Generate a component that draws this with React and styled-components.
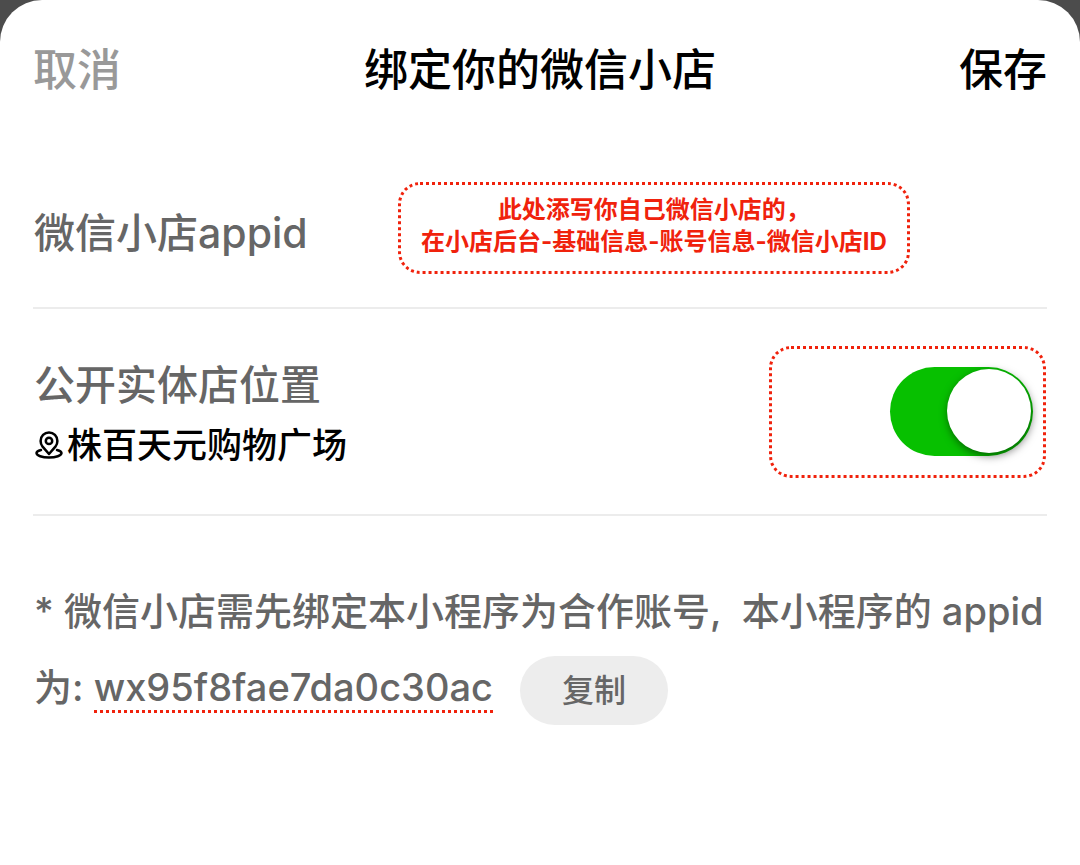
import { useState } from "react";
import styled, { createGlobalStyle } from "styled-components";

export default function App() {

  const [showLocation, setShowLocation] = useState(true);
  const appid = "wx95f8fae7da0c30ac"

  function copyAppid() {
    navigator.clipboard?.writeText(appid)
  }

  return (
    <>
      <GlobalStyle />
      <Sheet>
        <Header>
          <CancelButton type="button">取消</CancelButton>
          <Title>绑定你的微信小店</Title>
          <SaveButton type="button">保存</SaveButton>
        </Header>

        <Row $minHeight={148}>
          <AppidLabel>微信小店appid</AppidLabel>
          <Hint>
            此处添写你自己微信小店的，<br />
            在小店后台-基础信息-账号信息-微信小店ID
          </Hint>
        </Row>

        <Row $minHeight={205}>
          <LocationInfo>
            <Label htmlFor="show-location">公开实体店位置</Label>
            <Store>
              <PinIcon />
              株百天元购物广场
            </Store>
          </LocationInfo>
          <SwitchFrame>
            <Switch
              id="show-location"
              type="checkbox"
              role="switch"
              checked={showLocation}
              onChange={(e) => setShowLocation(e.target.checked)}
            />
          </SwitchFrame>
        </Row>

        <Note>
          * 微信小店需先绑定本小程序为合作账号,&nbsp; 本小程序的 appid{" "}
          <AppidGroup>
            为: <AppidValue>{appid}</AppidValue>
            <CopyButton type="button" onClick={copyAppid}>复制</CopyButton>
          </AppidGroup>
        </Note>
      </Sheet>
    </>
  )
}

function PinIcon() {
  return (
    <Pin viewBox="0 0 28 28" aria-hidden="true">
      <path d="M14 23L7.600 15.600C6.300 14 5.600 12 5.600 9.900a8.400 8.400 0 0 1 16.800 0c0 2.100-.7 4.100-2 5.700Z" />
      <circle cx="14" cy="9.900" r="3.200" />
      <path d="M6 19C3.200 19.700 1.500 20.800 1.500 22c0 2.600 5.600 4.500 12.500 4.500s12.500-1.900 12.500-4.500c0-1.200-1.700-2.300-4.500-3" />
    </Pin>
  )
}

const GlobalStyle = createGlobalStyle`
  * {
    box-sizing: border-box;
  }
  body {
    margin: 0;
    background-color: #4c4c4c;
    font-family: Inter, "Noto Sans CJK SC", sans-serif;
    font-weight: 500;
  }
  button {
    border: none;
    padding: 0;
    background: none;
    font-family: inherit;
    font-weight: 500;
    cursor: pointer;
  }
`
const Sheet = styled.main`
  min-height: 100vh;
  padding: 0 33px 60px;
  border-radius: 42px 42px 0 0;
  background-color: #fff;
`
const Header = styled.header`
  display: flex;
  align-items: center;
  justify-content: space-between;
  height: 134px;
  margin-bottom: 25px;
`
const Title = styled.h1`
  margin: 0;
  font-size: 44px;
  font-weight: 500;
  color: #000;
`
const HeaderButton = styled.button`
  font-size: 44px;
`
const CancelButton = styled(HeaderButton)`
  color: #999;
`
const SaveButton = styled(HeaderButton)`
  color: #000;
`
const Row = styled.section`
  display: flex;
  align-items: center;
  min-height: ${(props) => props.$minHeight}px;
  box-sizing: content-box;
  padding: 0 1px;
  border-bottom: 2px solid #ececec;
`
const Label = styled.label`
  font-size: 41px;
  line-height: 60px;
  color: #666;
`
const AppidLabel = styled(Label).attrs({ as: "span" })`
  flex: 0 0 364px;
`
const Hint = styled.p`
  margin: 0 0 11px;
  padding: 9px 20px 13px;
  border: 3px dotted #f0220c;
  border-radius: 22px;
  font-size: 24px;
  font-weight: 700;
  line-height: 32px;
  text-align: center;
  white-space: nowrap;
  color: #f0220c;
`
const LocationInfo = styled.div`
  display: flex;
  flex-direction: column;
  flex-grow: 1;
  padding-top: 6px;
`
const Store = styled.div`
  display: flex;
  align-items: center;
  font-size: 35px;
  line-height: 60px;
  color: #000;
`
const Pin = styled.svg`
  width: 28px;
  height: 28px;
  margin: 0 4px 0 1px;
  fill: none;
  stroke: currentColor;
  stroke-width: 2.500;
  stroke-linejoin: round;
  stroke-linecap: round;
`
const SwitchFrame = styled.div`
  display: flex;
  align-items: center;
  justify-content: flex-end;
  width: 277px;
  height: 132px;
  padding: 0 10px;
  border: 3px dotted #f0220c;
  border-radius: 22px;
`
const Switch = styled.input`
  appearance: none;
  display: flex;
  width: 143px;
  height: 89px;
  margin: 0;
  padding: 2px;
  border-radius: 45px;
  background-color: #ddd;
  cursor: pointer;

  &::before {
    content: "";
    width: 84px;
    height: 84px;
    border-radius: 50%;
    background-color: #fff;
    box-shadow: 1px 3px 8px rgba(0, 0, 0, 0.5);
  }
  &:checked {
    justify-content: flex-end;
    background-color: #07c000;
  }
`
const Note = styled.p`
  margin: 57px 0 0;
  padding-left: 1px;
  font-size: 38px;
  line-height: 76px;
  color: #666;
`
const AppidGroup = styled.span`
  white-space: nowrap;
`
const AppidValue = styled.span`
  border-bottom: 3px dotted #f0220c;
`
const CopyButton = styled.button`
  width: 148px;
  height: 69px;
  margin-left: 27px;
  border-radius: 35px;
  background-color: #ededed;
  font-size: 32px;
  line-height: 69px;
  vertical-align: middle;
  color: #666;
`
